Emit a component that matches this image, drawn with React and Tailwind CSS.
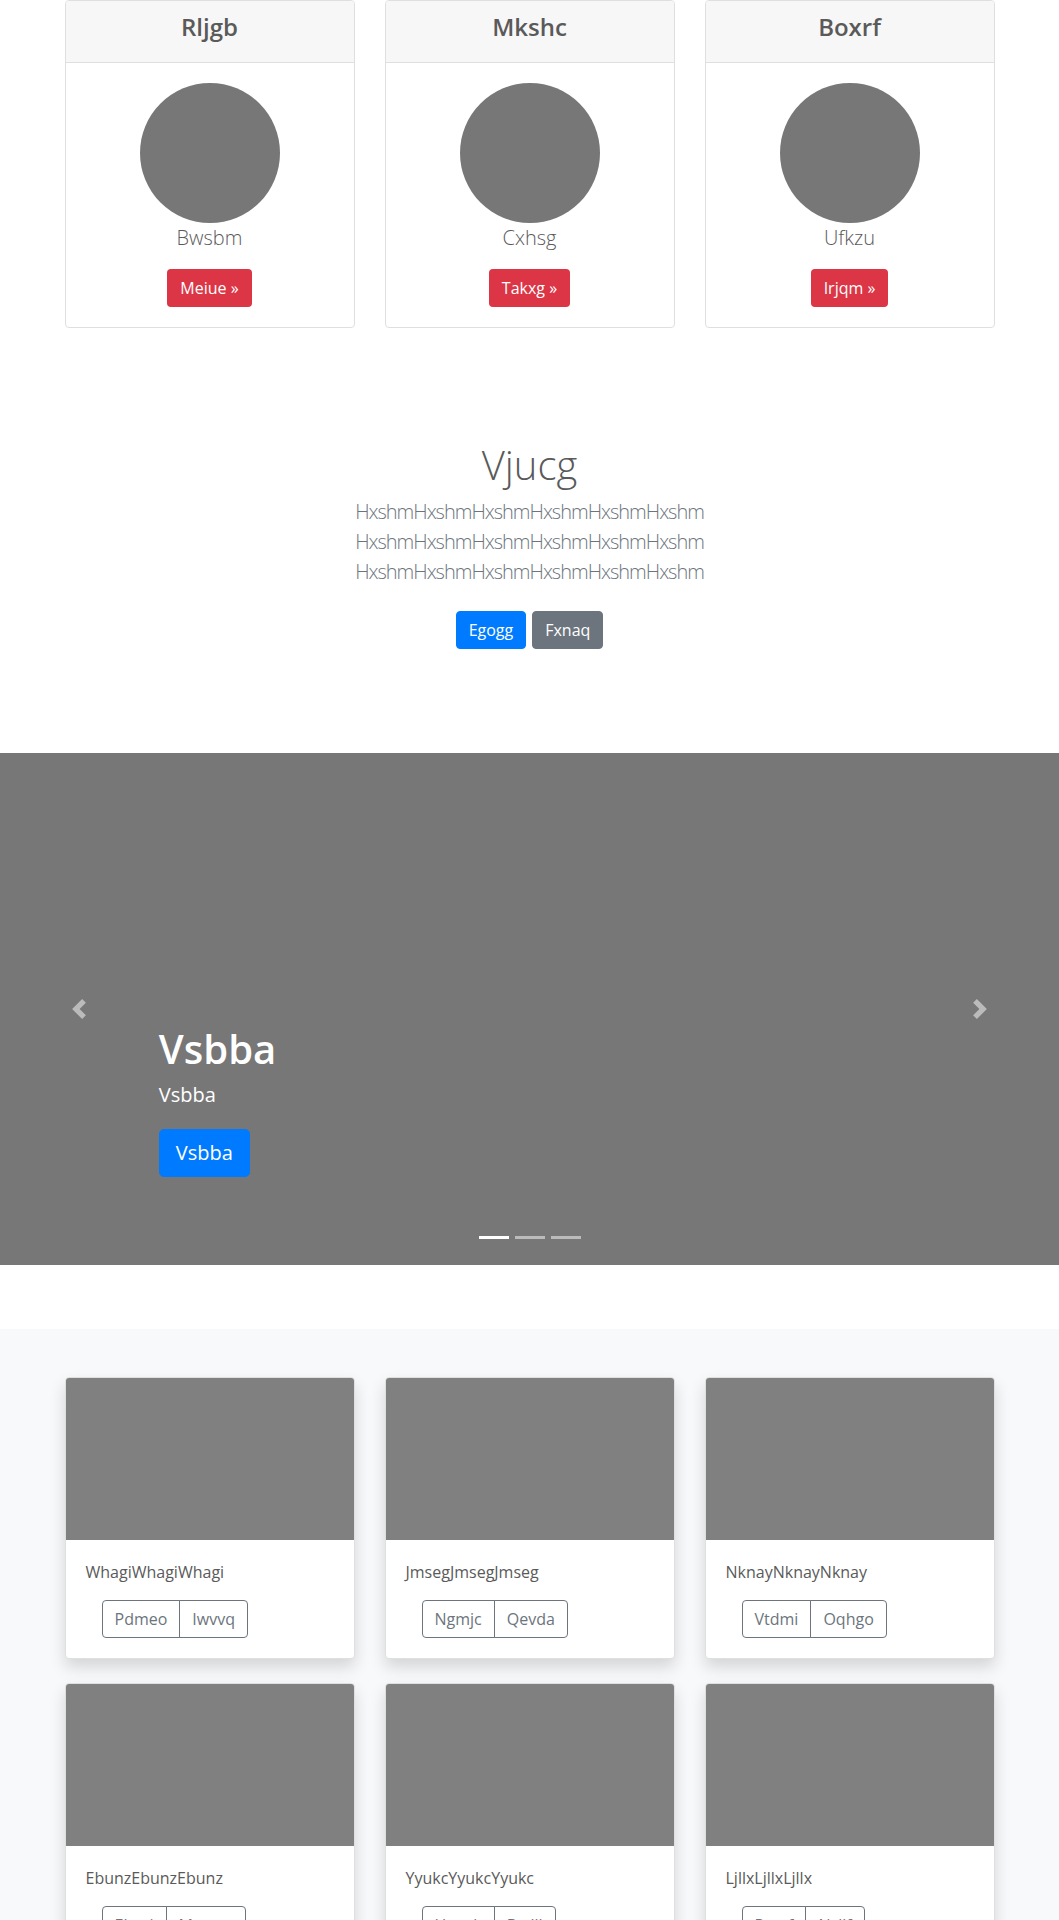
import React from "react";

const featureCards = [
  { title: "Rljgb", name: "Bwsbm", action: "Meiue" },
  { title: "Mkshc", name: "Cxhsg", action: "Takxg" },
  { title: "Boxrf", name: "Ufkzu", action: "Irjqm" },
];

const albumCards = [
  { text: "WhagiWhagiWhagi", buttons: ["Pdmeo", "Iwvvq"] },
  { text: "JmsegJmsegJmseg", buttons: ["Ngmjc", "Qevda"] },
  { text: "NknayNknayNknay", buttons: ["Vtdmi", "Oqhgo"] },
  { text: "EbunzEbunzEbunz", buttons: ["Ehxvi", "Mxwup"] },
  { text: "YyukcYyukcYyukc", buttons: ["Hnzok", "Bcdll"] },
  { text: "LjllxLjllxLjllx", buttons: ["Pnrsf", "Ncllf"] },
];

function ChevronLeft() {
  return (
    <svg width="20" height="20" viewBox="0 0 8 8" fill="#fff">
      <path d="M5.25 0l-4 4 4 4 1.5-1.5L4.25 4l2.5-2.5L5.25 0z" />
    </svg>
  );
}

function ChevronRight() {
  return (
    <svg width="20" height="20" viewBox="0 0 8 8" fill="#fff">
      <path d="M2.75 0l-1.5 1.5L3.75 4l-2.5 2.5L2.75 8l4-4-4-4z" />
    </svg>
  );
}

export default function App() {
  return (
    <div className="min-h-screen bg-white text-[#5a5a5a] font-['Open_Sans','Liberation_Sans',sans-serif] text-[16px] leading-[24px]">
      {/* Feature cards */}
      <div className="mx-auto w-[930px] grid grid-cols-3 gap-[30px]">
        {featureCards.map((card) => (
          <div
            key={card.title}
            className="border border-[#dfdfdf] rounded-[4px] bg-white overflow-hidden"
          >
            <div className="bg-[#f7f7f7] border-b border-[#dfdfdf] px-5 py-3 text-center">
              <h4 className="text-[24px] leading-[28.8px] font-semibold mb-2">
                {card.title}
              </h4>
            </div>
            <div className="p-5 flex flex-col items-center text-center">
              <div className="w-[140px] h-[140px] rounded-full bg-[#777]" />
              <p className="text-[20px] leading-[30px] font-light mb-4">
                {card.name}
              </p>
              <button className="bg-[#dc3545] text-white px-3 py-[6px] leading-[24px] rounded-[4px] border border-transparent">
                {card.action} »
              </button>
            </div>
          </div>
        ))}
      </div>

      {/* Jumbotron */}
      <section className="pt-[113px] pb-[104px] text-center">
        <h1 className="text-[40px] leading-[48px] font-light mb-2">Vjucg</h1>
        <p className="text-[20px] leading-[30px] font-light tracking-[-1px] text-[#6c757d] mb-6">
          HxshmHxshmHxshmHxshmHxshmHxshm
          <br />
          HxshmHxshmHxshmHxshmHxshmHxshm
          <br />
          HxshmHxshmHxshmHxshmHxshmHxshm
        </p>
        <div className="flex justify-center gap-[6px]">
          <button className="bg-[#007bff] text-white px-3 py-[6px] leading-[24px] rounded-[4px] border border-[#007bff]">
            Egogg
          </button>
          <button className="bg-[#6c757d] text-white px-3 py-[6px] leading-[24px] rounded-[4px] border border-[#6c757d]">
            Fxnaq
          </button>
        </div>
      </section>

      {/* Carousel */}
      <div className="relative h-[512px] bg-[#777]">
        <div className="absolute left-0 top-0 bottom-0 w-[15%] flex items-center justify-center opacity-50">
          <ChevronLeft />
        </div>
        <div className="absolute right-0 top-0 bottom-0 w-[15%] flex items-center justify-center opacity-50">
          <ChevronRight />
        </div>

        <div className="absolute left-[15%] right-[15%] bottom-[88px] text-left text-white">
          <h1 className="text-[40px] leading-[48px] font-semibold mb-2">Vsbba</h1>
          <p className="text-[20px] leading-[28px] mb-5">Vsbba</p>
          <button className="bg-[#007bff] text-white text-[20px] leading-[30px] px-4 py-2 rounded-[4.8px] border border-[#007bff]">
            Vsbba
          </button>
        </div>

        <div className="absolute left-0 right-0 bottom-[26px] flex justify-center gap-[6px]">
          <span className="w-[30px] h-[3px] bg-white" />
          <span className="w-[30px] h-[3px] bg-white/50" />
          <span className="w-[30px] h-[3px] bg-white/50" />
        </div>
      </div>

      {/* Album */}
      <div className="mt-[64px] bg-[#f8f9fa] py-12">
        <div className="mx-auto w-[930px] grid grid-cols-3 gap-x-[30px] gap-y-6">
          {albumCards.map((card) => (
            <div
              key={card.text}
              className="bg-white border border-[#dfdfdf] rounded-[4px] overflow-hidden shadow-[0_8px_16px_rgba(0,0,0,0.15)]"
            >
              <div className="w-full aspect-video bg-[#808080]" />
              <div className="p-5">
                <p className="mb-4">{card.text}</p>
                <div className="ml-4 flex">
                  <button className="px-3 py-[6px] leading-[24px] text-[#6c757d] border border-[#6c757d] rounded-l-[4px]">
                    {card.buttons[0]}
                  </button>
                  <button className="-ml-px px-3 py-[6px] leading-[24px] text-[#6c757d] border border-[#6c757d] rounded-r-[4px]">
                    {card.buttons[1]}
                  </button>
                </div>
              </div>
            </div>
          ))}
        </div>
      </div>
    </div>
  );
}
